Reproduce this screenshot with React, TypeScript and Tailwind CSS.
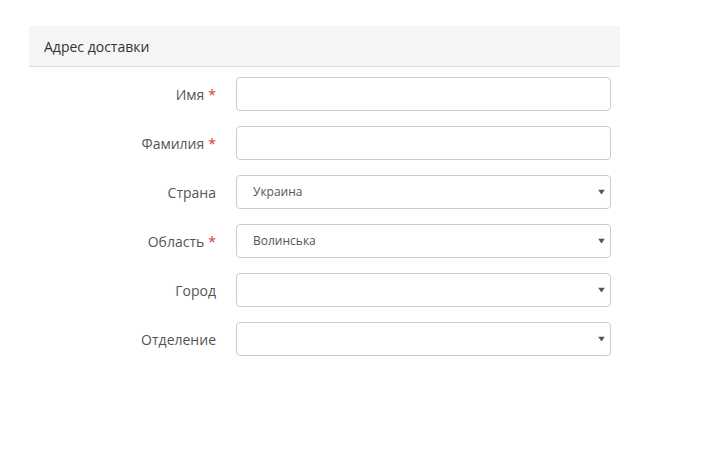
import React from "react";

const font = { fontFamily: '"Open Sans", "Noto Sans", sans-serif' };

function Row({ label, required, children }: { label: string; required?: boolean; children: React.ReactNode }) {
  return (
    <div className="flex items-center h-[34px] mb-[15px]">
      <div className="w-[187px] text-right text-[14px] text-[#555]">
        {label}
        {required && <span className="text-[#e0343c] ml-[4px]">*</span>}
      </div>
      <div className="ml-[20px] w-[375px] h-[34px]">{children}</div>
    </div>
  );
}

function Input() {
  return <div className="w-full h-full border border-[#ccc] rounded-[4px] bg-white" />;
}

function Select({ value }: { value?: string }) {
  return (
    <div className="relative w-full h-full border border-[#ccc] rounded-[4px] bg-white flex items-center pl-[16px] text-[12px] text-[#555]">
      {value}
      <svg className="absolute right-[5px] top-1/2 -translate-y-1/2" width="7" height="5" viewBox="0 0 7 5">
        <path d="M0 0 L7 0 L3.5 5 Z" fill="#555" />
      </svg>
    </div>
  );
}

export default function App() {
  return (
    <div className="w-[728px] h-[462px] bg-white" style={font}>
      <div className="pt-[26px] pl-[29px]">
        <div className="w-[591px] h-[41px] bg-[#f5f5f5] border-b border-[#ddd] flex items-center pl-[15px] text-[14px] text-[#333]">
          Адрес доставки
        </div>
        <div className="mt-[10px]">
          <Row label="Имя" required><Input /></Row>
          <Row label="Фамилия" required><Input /></Row>
          <Row label="Страна"><Select value="Украина" /></Row>
          <Row label="Область" required><Select value="Волинська" /></Row>
          <Row label="Город"><Select /></Row>
          <Row label="Отделение"><Select /></Row>
        </div>
      </div>
    </div>
  );
}
